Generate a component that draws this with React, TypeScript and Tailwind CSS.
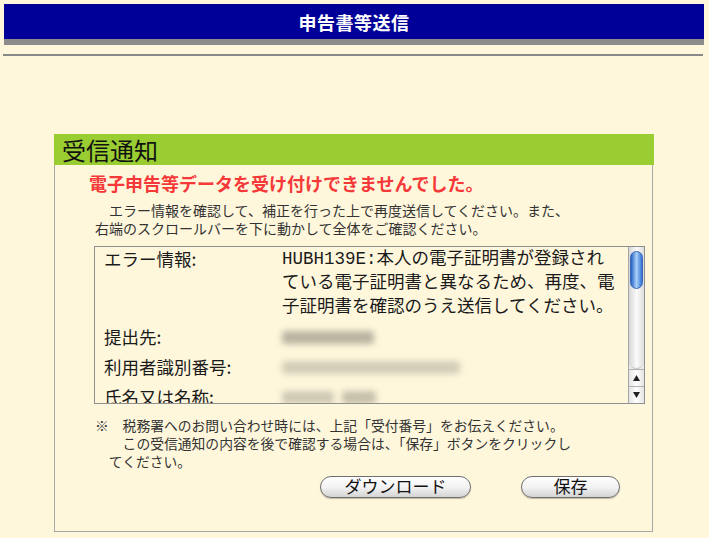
import React from 'react';

const rows = [
  {
    label: 'エラー情報:',
    value:
      'HUBH139E:本人の電子証明書が登録されている電子証明書と異なるため、再度、電子証明書を確認のうえ送信してください。',
  },
  { label: '提出先:', blurs: [{ w: 92, c: 'bg-[#b9b3a1]' }] },
  { label: '利用者識別番号:', blurs: [{ w: 178, c: 'bg-[#d3ccb6]' }] },
  { label: '氏名又は名称:', blurs: [{ w: 52, c: 'bg-[#cfc8b3]' }, { w: 34, c: 'bg-[#c6bfaa]' }] },
  { label: '住所又は所在地:', blurs: [{ w: 140, c: 'bg-[#cfc8b3]' }] },
];

const ScrollBar: React.FC = () => (
  <div className="w-[16px] flex flex-col border-l border-[#a6a6a6] bg-[#ececec]">
    <div className="flex-1 px-[1px] pt-[4px] bg-linear-to-r from-[#d6d6d6] via-[#fbfbfb] to-[#dedede] rounded-b-[8px] border-b border-[#c4c4c4]">
      <div className="h-[38px] rounded-full border border-[#3a66b0] bg-linear-to-r from-[#2561c6] via-[#a9d0f7] to-[#3170d4]" />
    </div>
    <div className="h-[17px] border-t border-[#b0b0b0] bg-linear-to-r from-[#e4e4e4] via-white to-[#e4e4e4] flex items-center justify-center">
      <svg width="7" height="6" viewBox="0 0 7 6">
        <path d="M3.5 0 L7 6 L0 6 Z" fill="#222" />
      </svg>
    </div>
    <div className="h-[17px] border-t border-[#b0b0b0] bg-linear-to-r from-[#e4e4e4] via-white to-[#e4e4e4] flex items-center justify-center">
      <svg width="7" height="6" viewBox="0 0 7 6">
        <path d="M0 0 L7 0 L3.5 6 Z" fill="#222" />
      </svg>
    </div>
  </div>
);

const AquaButton: React.FC<{ label: string; width: string }> = ({ label, width }) => (
  <button
    className={`${width} h-[22px] rounded-full border border-[#6f6f6f] bg-linear-to-b from-white via-[#f3f3f3] to-[#d4d4d4] text-[17px] leading-[18px] pb-[3px] text-[#111] shadow-[0_1px_1px_rgba(0,0,0,0.25)]`}
  >
    {label}
  </button>
);

export default function App() {
  return (
    <div className="min-h-screen w-full bg-[#fff7dc] pt-[4px] font-['Noto_Sans_CJK_JP',sans-serif] text-[#333]">
      <div className="ml-[4px] w-[700px] h-[35px] bg-[#000099] flex items-center justify-center">
        <span className="text-white font-bold text-[18px] leading-none tracking-[0.5px]">申告書等送信</span>
      </div>
      <div className="ml-[4px] w-[700px] h-[6px] bg-[#8c8c8c]" />
      <div className="ml-[3px] mt-[9px] w-[700px] h-[2px] bg-[#8a8a8a]" />

      <div className="ml-[54px] mt-[78px] w-[600px]">
        <div className="h-[31px] bg-[#9acd32] pl-[8px] flex items-center">
          <span className="text-[24px] leading-none text-[#111]">受信通知</span>
        </div>
        <div className="h-[367px] border-x border-b border-[#a8a8a8] mr-[1px]">
          <div className="pt-[7px] pl-[34px] text-[18px] leading-[22px] font-bold text-[#f53838]">
            電子申告等データを受け付けできませんでした。
          </div>
          <div className="mt-[7px] pl-[40px] text-[14px] leading-[18px]">
            <div>　エラー情報を確認して、補正を行った上で再度送信してください。また、</div>
            <div>右端のスクロールバーを下に動かして全体をご確認ください。</div>
          </div>

          <div className="mt-[9px] ml-[39px] w-[551px] h-[158px] border border-[#8f8f8f] flex">
            <div className="flex-1 overflow-hidden pl-[9px] text-[17.5px] leading-[24px] text-[#1a1a1a]">
              {rows.map((row) => (
                <div key={row.label} className="flex mb-[6px]">
                  <div className="w-[178px] shrink-0">{row.label}</div>
                  {row.value ? (
                    <div className="w-[334px] font-['Liberation_Mono','Noto_Sans_CJK_JP',monospace]">{row.value}</div>
                  ) : (
                    <div className="flex items-center gap-[8px] h-[24px]">
                      {row.blurs!.map((b, i) => (
                        <div
                          key={i}
                          className={`h-[13px] rounded-[3px] blur-[3px] ${b.c}`}
                          style={{ width: b.w }}
                        />
                      ))}
                    </div>
                  )}
                </div>
              ))}
            </div>
            <ScrollBar />
          </div>

          <div className="mt-[12px] pl-[40px] text-[13.8px] leading-[18px]">
            <div>※　税務署へのお問い合わせ時には、上記「受付番号」をお伝えください。</div>
            <div className="pl-[13.8px]">　この受信通知の内容を後で確認する場合は、「保存」ボタンをクリックし</div>
            <div className="pl-[13.8px]">てください。</div>
          </div>

          <div className="mt-[6px] ml-[265px] flex gap-[50px]">
            <AquaButton label="ダウンロード" width="w-[151px]" />
            <AquaButton label="保存" width="w-[99px]" />
          </div>
        </div>
      </div>
    </div>
  );
}
